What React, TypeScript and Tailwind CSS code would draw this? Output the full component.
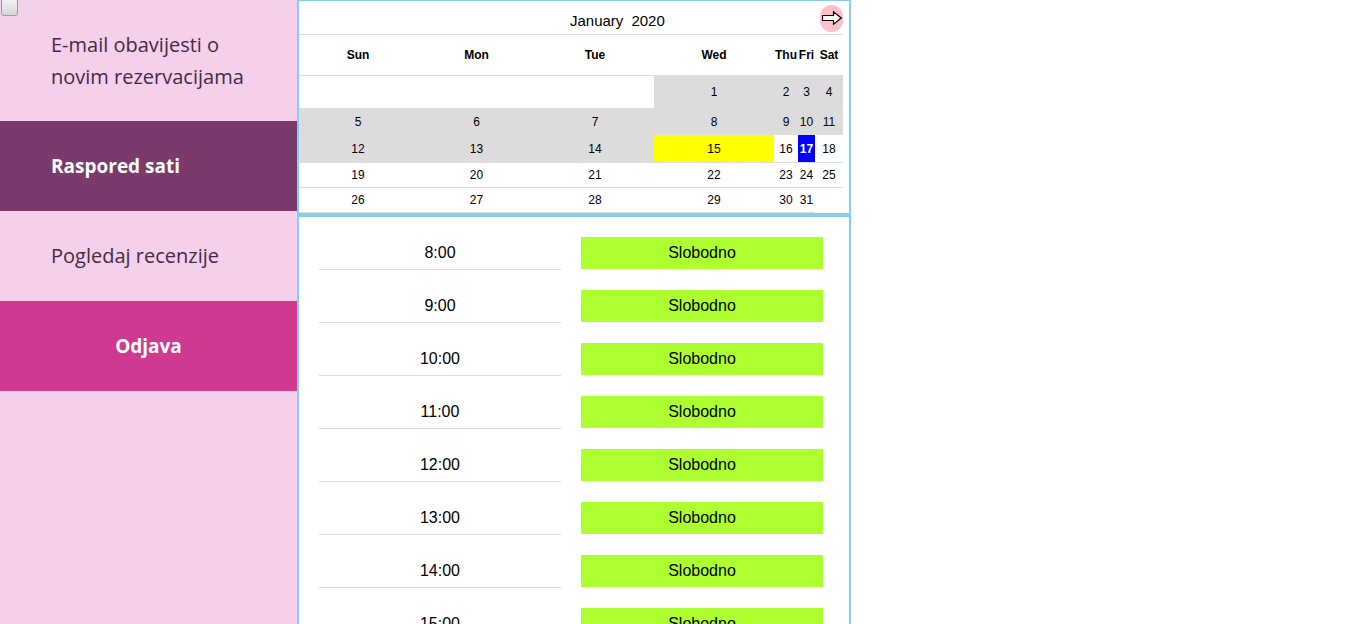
const menu = [
  { label: ["E-mail obavijesti o", "novim rezervacijama"], h: "h-[121px]", cls: "bg-[#f4d0ea] text-[#472a42] text-[20px] pl-[51px]" },
  { label: ["Raspored sati"], h: "h-[90px]", cls: "bg-[#7b3a6c] text-white text-[19px] font-bold pl-[51px]" },
  { label: ["Pogledaj recenzije"], h: "h-[90px]", cls: "bg-[#f4d0ea] text-[#472a42] text-[20px] pl-[51px]" },
  { label: ["Odjava"], h: "h-[90px]", cls: "bg-[#cf3992] text-white text-[19px] font-bold justify-center" },
];

const cols = "grid grid-cols-[118px_119px_118px_120px_24px_17px_28px] w-[544px]";

type Cell = { d?: number; bg?: string; today?: boolean } | null;

const g = "bg-[#dcdcdc]";
const weeks: { h: string; cells: Cell[] }[] = [
  { h: "h-[33px]", cells: [{}, {}, {}, { d: 1, bg: g }, { d: 2, bg: g }, { d: 3, bg: g }, { d: 4, bg: g }] },
  { h: "h-[26px]", cells: [5, 6, 7, 8, 9, 10, 11].map((d) => ({ d, bg: g })) },
  {
    h: "h-[28px]",
    cells: [
      { d: 12, bg: g },
      { d: 13, bg: g },
      { d: 14, bg: g },
      { d: 15, bg: "bg-[#ffff00]" },
      { d: 16 },
      { d: 17, today: true },
      { d: 18 },
    ],
  },
  { h: "h-[25px]", cells: [19, 20, 21, 22, 23, 24, 25].map((d) => ({ d })) },
  { h: "h-[25px]", cells: [26, 27, 28, 29, 30, 31].map((d) => ({ d })) },
];

const days = ["Sun", "Mon", "Tue", "Wed", "Thu", "Fri", "Sat"];
const hours = ["8:00", "9:00", "10:00", "11:00", "12:00", "13:00", "14:00", "15:00"];

function Calendar() {
  return (
    <div className="border-t border-b-2 border-[#87ceeb] text-[12px] text-black">
      <div className="flex items-center justify-between w-[544px] h-[34px] border-b border-[#dddddd]">
        <div className="flex gap-[8px] pl-[271px] pt-[8px] text-[15px]">
          <span>January</span>
          <span>2020</span>
        </div>
        <button className="flex items-center justify-center w-[23px] h-[27px] rounded-full bg-[#ffc0cb] mt-[1px]">
          <svg width="20" height="14" viewBox="0 0 20 14">
            <polygon points="0.5,4.5 11.5,4.5 11.5,0.8 19.2,7 11.5,13.2 11.5,9.5 0.5,9.5" fill="white" stroke="black" strokeWidth="1.2" />
          </svg>
        </button>
      </div>
      <div className={cols}>
        {days.map((d) => (
          <div key={d} className="h-[41px] flex items-center justify-center font-bold border-b border-[#dddddd]">
            {d}
          </div>
        ))}
      </div>
      {weeks.map((w, i) => (
        <div key={i} className={cols}>
          {w.cells.map((c, j) =>
            c ? (
              <div
                key={j}
                className={`${w.h} flex items-center justify-center border-b border-[#dddddd] ${
                  c.today ? "bg-[#0000ff] text-white font-bold" : c.bg ?? "bg-white"
                }`}
              >
                {c.d}
              </div>
            ) : null
          )}
        </div>
      ))}
    </div>
  );
}

export default function App() {
  return (
    <div className="flex min-h-screen bg-white font-['Liberation_Sans',Arial,sans-serif]">
      <aside className="relative w-[297px] shrink-0 bg-[#f4d0ea] font-['Open_Sans','Noto_Sans',sans-serif]">
        <input
          type="checkbox"
          className="absolute left-[1px] top-[-2px] w-[17px] h-[18px] appearance-none rounded-[3px] border border-[#9a9a9a] bg-gradient-to-b from-[#f2f2f2] to-[#d6d6d6]"
        />
        {menu.map((m) => (
          <div key={m.label[0]} className={`flex items-center ${m.h} ${m.cls}`}>
            <div className="leading-[32px]">
              {m.label.map((l) => (
                <div key={l}>{l}</div>
              ))}
            </div>
          </div>
        ))}
      </aside>
      <main className="w-[554px] shrink-0 border-x-2 border-[#87ceeb]">
        <Calendar />
        <div className="border-t-2 border-[#87ceeb] pt-[20px] pl-[20px]">
          {hours.map((h) => (
            <div key={h} className="flex gap-[20px] mb-[20px]">
              <div className="w-[242px] h-[33px] border-b border-[#dddddd] text-center text-[16px] leading-[32px] text-black">
                {h}
              </div>
              <button className="w-[242px] h-[32px] bg-[#adff2f] text-[16px] text-black">Slobodno</button>
            </div>
          ))}
        </div>
      </main>
    </div>
  );
}
